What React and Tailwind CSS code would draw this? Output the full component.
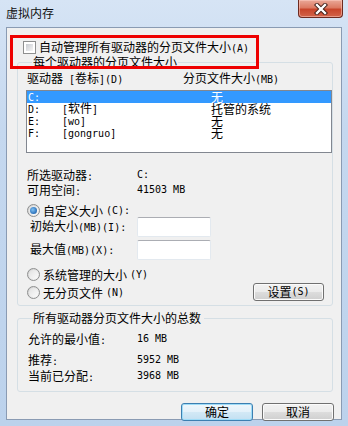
import React from "react";

function T({ s }) {
  const parts = s.split(/([\x20-\x7e]+)/).filter(Boolean);
  return parts.map((p, i) =>
    /^[\x20-\x7e]+$/.test(p) ? (
      <span key={i} className="font-['DejaVu_Sans_Mono',monospace] text-[10px] whitespace-pre">
        {p}
      </span>
    ) : (
      <span key={i}>{p}</span>
    )
  );
}

function Radio({ checked }) {
  return (
    <span className="w-[13px] h-[13px] rounded-full border border-[#8e8f8f] bg-[linear-gradient(135deg,#cfcfcf,#f9f9f9)] flex items-center justify-center shrink-0">
      <span className="w-[9px] h-[9px] rounded-full bg-[linear-gradient(135deg,#e2e2e2,#fbfbfb)] flex items-center justify-center">
        {checked && (
          <span className="w-[7px] h-[7px] rounded-full bg-[radial-gradient(circle_at_40%_40%,#7fc0f3_0%,#2a6fb8_70%,#1c4f8a_100%)]" />
        )}
      </span>
    </span>
  );
}

function Btn({ label, def }) {
  return (
    <div
      className={
        "w-[72px] h-[18px] rounded-[3px] border flex items-center justify-center leading-[14px] " +
        (def
          ? "border-[#3c7fb1] shadow-[inset_0_0_0_1px_#9fdcf7] bg-[linear-gradient(#f0f7fb_0%,#e3f1fa_50%,#d3e9f6_50%,#c3e0f2_100%)]"
          : "border-[#707070] shadow-[inset_0_0_0_1px_#fbfbfb] bg-[linear-gradient(#f2f2f2_0%,#ebebeb_50%,#dddddd_50%,#cfcfcf_100%)]")
      }
    >
      <T s={label} />
    </div>
  );
}

function Input() {
  return (
    <div className="w-[74px] h-[20px] bg-white rounded-[2px] border border-[#e3e9ef] border-t-[#abadb3]" />
  );
}

const rows = [
  ["C:", "", "无", true],
  ["D:", "[软件]", "托管的系统", false],
  ["E:", "[wo]", "无", false],
  ["F:", "[gongruo]", "无", false],
];

export default function App() {
  return (
    <div className="w-[348px] h-[426px] bg-[linear-gradient(180deg,#d6e4f5_0%,#c5d8ef_30%,#bcd2ec_100%)] flex flex-col font-['Noto_Sans_CJK_SC',sans-serif] text-[12px] text-black">
      {/* title bar */}
      <div className="h-[27px] flex items-start shrink-0">
        <span className="ml-[6px] mt-[6px] leading-[14px] text-[#111]">虚拟内存</span>
        <div className="ml-auto mr-[5px] w-[45px] h-[18px] rounded-b-[4px] border border-t-0 border-[#6d2a20] bg-[linear-gradient(#eaa898_0%,#dc7a63_45%,#c8452b_55%,#d2644a_100%)] shadow-[inset_0_0_0_1px_rgba(255,210,200,0.5)] flex items-center justify-center">
          <svg width="14" height="12" viewBox="0 0 14 12">
            <path d="M3 2 L11 10 M11 2 L3 10" stroke="#3b1a14" strokeWidth="4.2" strokeLinecap="square" />
            <path d="M3 2 L11 10 M11 2 L3 10" stroke="#ffffff" strokeWidth="2.4" strokeLinecap="square" />
          </svg>
        </div>
      </div>

      {/* client */}
      <div className="mx-[6px] h-[393px] shrink-0 border border-[#8a9bb3] bg-[#f0f0f0] relative flex flex-col">
        {/* checkbox row */}
        <div className="mt-[13px] ml-[16px] h-[13px] flex items-center gap-[3px]">
          <span className="w-[13px] h-[13px] border border-[#8e8f8f] bg-white p-[2px] shrink-0">
            <span className="block w-full h-full bg-[linear-gradient(135deg,#c9ccd1,#f5f5f5)]" />
          </span>
          <span className="leading-[13px] whitespace-nowrap">
            <T s="自动管理所有驱动器的分页文件大小(A)" />
          </span>
        </div>

        {/* group 1 */}
        <fieldset className="mt-[1px] ml-[10px] w-[316px] border border-[#d5dfe5] rounded-[3px] pl-[8px] pb-[4px]">
          <legend className="ml-[6px] px-[1px] leading-[14px]">每个驱动器的分页文件大小</legend>
          <div className="mt-[2px] pl-[1px] flex leading-[14px] whitespace-nowrap">
            <span className="w-[156px]">
              <T s="驱动器 [卷标](D)" />
            </span>
            <span>
              <T s="分页文件大小(MB)" />
            </span>
          </div>
          <div className="mt-[3px] w-[306px] h-[63px] border border-[#828790] bg-white">
            {rows.map(([d, l, s, sel]) => (
              <div
                key={d}
                className={
                  "h-[12px] flex items-center leading-[12px] whitespace-nowrap " +
                  (sel ? "bg-[#3399ff] text-white" : "")
                }
              >
                <span className="pl-[1px] w-[35px]">
                  <T s={d} />
                </span>
                <span className="w-[149px]">
                  <T s={l} />
                </span>
                <span>{s}</span>
              </div>
            ))}
          </div>

          <div className="mt-[15px] pl-[1px] flex leading-[13px]">
            <span className="w-[110px]">
              <T s="所选驱动器:" />
            </span>
            <T s="C:" />
          </div>
          <div className="pl-[1px] flex leading-[13px]">
            <span className="w-[110px]">
              <T s="可用空间:" />
            </span>
            <T s="41503 MB" />
          </div>

          <div className="mt-[6px] pl-[1px] h-[13px] flex items-center gap-[3px] leading-[13px]">
            <Radio checked />
            <T s="自定义大小(C):" />
          </div>
          <div className="pl-[4px] h-[20px] flex items-center leading-[14px]">
            <span className="w-[107px]">
              <T s="初始大小(MB)(I):" />
            </span>
            <Input />
          </div>
          <div className="mt-[3px] pl-[4px] h-[20px] flex items-center leading-[14px]">
            <span className="w-[107px]">
              <T s="最大值(MB)(X):" />
            </span>
            <Input />
          </div>

          <div className="mt-[8px] pl-[1px] h-[13px] flex items-center gap-[3px] leading-[13px]">
            <Radio />
            <T s="系统管理的大小(Y)" />
          </div>
          <div className="mt-[2px] pl-[1px] h-[18px] flex items-center gap-[3px] leading-[13px]">
            <Radio />
            <T s="无分页文件(N)" />
            <div className="ml-auto mr-[8px]">
              <div className="w-[71px] h-[18px] rounded-[3px] border border-[#707070] shadow-[inset_0_0_0_1px_#fbfbfb] bg-[linear-gradient(#f2f2f2_0%,#ebebeb_50%,#dddddd_50%,#cfcfcf_100%)] flex items-center justify-center leading-[14px]">
                <T s="设置(S)" />
              </div>
            </div>
          </div>
        </fieldset>

        {/* group 2 */}
        <fieldset className="mt-[5px] ml-[10px] w-[316px] border border-[#d5dfe5] rounded-[3px] pl-[10px] pb-[7px]">
          <legend className="ml-[6px] px-[1px] leading-[14px] -translate-x-[2px]">所有驱动器分页文件大小的总数</legend>
          <div className="mt-[7px] flex leading-[13px]">
            <span className="w-[109px]">
              <T s="允许的最小值:" />
            </span>
            <T s="16 MB" />
          </div>
          <div className="mt-[6px] flex leading-[13px]">
            <span className="w-[109px]">
              <T s="推荐:" />
            </span>
            <T s="5952 MB" />
          </div>
          <div className="mt-[1px] flex leading-[13px]">
            <span className="w-[109px]">
              <T s="当前已分配:" />
            </span>
            <T s="3968 MB" />
          </div>
        </fieldset>

        {/* bottom buttons */}
        <div className="mt-[11px] pr-[7px] flex justify-end gap-[9px]">
          <Btn label="确定" def />
          <Btn label="取消" />
        </div>

        {/* red annotation */}
        <div className="absolute left-[3px] top-[7px] w-[249px] h-[34px] border-[3px] border-[#ee0000] pointer-events-none" />
      </div>
    </div>
  );
}
